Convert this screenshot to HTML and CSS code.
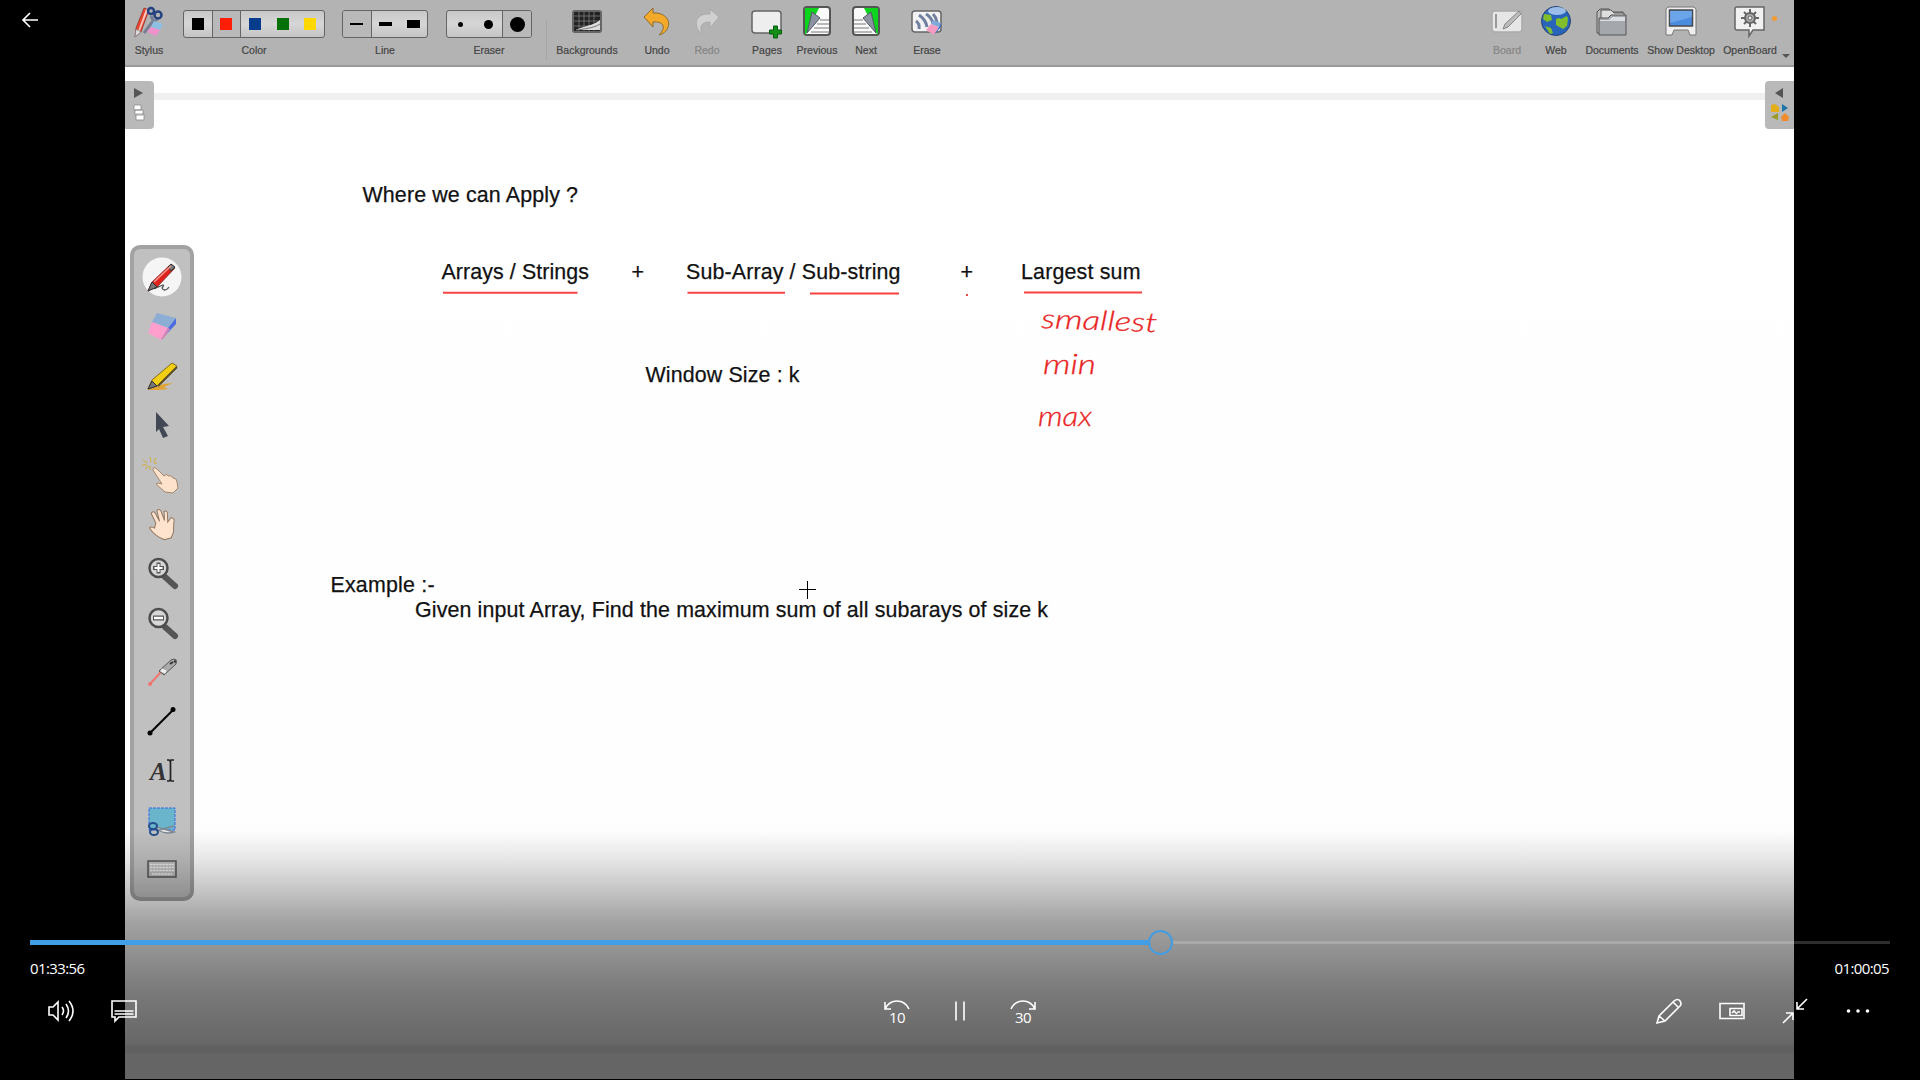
FILE: index.html
```html
<!DOCTYPE html>
<html lang="en">
<head>
<meta charset="utf-8">
<title>Video player</title>
<link rel="stylesheet" href="styles.css">
</head>
<body>
<main class="player">
  <section class="video">
    <header class="toolbar">
      <div class="tool stylus"><svg viewBox="0 0 32 32"><g transform="translate(1 2)"><path d="M10 1l5 2L7 25l-6 5 1-9z" fill="#e8442e" stroke="#863128" stroke-width=".7"/><path d="M12 2l2 1L5 26l-2 1z" fill="#fff" opacity=".7"/><path d="M2 22l5 3-6 5z" fill="#ddd" stroke="#777" stroke-width=".7"/><path d="M17 9l3 6 4-4M19 14l-9 12" stroke="#777f94" stroke-width="3" fill="none"/><circle cx="17" cy="4" r="3" fill="none" stroke="#24427f" stroke-width="2.500"/><circle cx="24" cy="8" r="3.500" fill="none" stroke="#24427f" stroke-width="2.500"/><path d="M20 14l9 3-3 6-9-3z" fill="#8ec0e4"/><path d="M17 20l9 3-4 6-9-4z" fill="#ef91cc"/></g></svg><span>Stylus</span></div>
      <div class="choice color"><div class="cells"><b><i class="black"></i></b><b class="on"><i class="red"></i></b><b><i class="blue"></i></b><b><i class="green"></i></b><b><i class="yellow"></i></b></div><span>Color</span></div>
      <div class="choice line"><div class="cells"><b class="on"><i class="thin"></i></b><b><i class="mid"></i></b><b><i class="thick"></i></b></div><span>Line</span></div>
      <div class="choice eraser"><div class="cells"><b><i class="dot-s"></i></b><b><i class="dot-m"></i></b><b class="on"><i class="dot-l"></i></b></div><span>Eraser</span></div>
      <div class="divider"></div>
      <div class="tool backgrounds"><svg viewBox="0 0 32 32"><rect x="2" y="6" width="28" height="21" rx="2" fill="#222" stroke="#666" stroke-width="2"/><path d="M3 11h26M3 16h26M3 21h26M8 7v19M13 7v19M18 7v19M23 7v19" stroke="#888" stroke-width=".7"/><path d="M5 25c7-4 17-4 24-10v10z" fill="#ddd"/><path d="M5 25c8-1 18-2 24-6" stroke="#777" fill="none"/></svg><span>Backgrounds</span></div>
      <div class="tool undo"><svg viewBox="0 0 32 32"><path d="M3 12L12 3v5c11-1 18 7 15 14-1 4-5 7-9 8 8-8 4-14-6-13v5z" fill="#f3aa2b" stroke="#8c6a2f"/></svg><span>Undo</span></div>
      <div class="tool redo faded"><svg viewBox="0 0 32 32"><path d="M28 12L19 4v5C8 8 3 15 6 23c1 3 3 4 5 5-3-7 0-11 8-11v6z" fill="#d0d0d0" stroke="#aaa"/></svg><span>Redo</span></div>
      <div class="tool pages"><svg viewBox="0 0 32 32"><rect x="1" y="6" width="29" height="22" rx="3" fill="#eee" stroke="#666" stroke-width="1.5"/><path d="M22.500 21h4v4h4v4h-4v4h-4v-4h-4v-4h4z" fill="#149018" stroke="#075b0a"/></svg><span>Pages</span></div>
      <div class="tool previous"><svg viewBox="0 0 32 32"><rect x="3" y="2" width="26" height="28" rx="3" fill="#fafafa" stroke="#555" stroke-width="2"/><path d="M4 3h14L5 29H4z" fill="#0cd31b"/><path d="M11 7l8 6L6 28z" fill="#8b93a0" stroke="#4e5862"/><path d="M19 15h9M16 19h12M13 23h15M10 27h18" stroke="#777"/></svg><span>Previous</span></div>
      <div class="tool next"><svg viewBox="0 0 32 32"><rect x="3" y="2" width="26" height="28" rx="3" fill="#fafafa" stroke="#555" stroke-width="2"/><path d="M28 3H14l13 26h1z" fill="#0cd31b"/><path d="M21 7l-8 6 13 15z" fill="#8b93a0" stroke="#4e5862"/><path d="M13 15H4M16 19H4M19 23H4M22 27H4" stroke="#777"/></svg><span>Next</span></div>
      <div class="tool erase"><svg viewBox="0 0 32 32"><rect x="1" y="6" width="29" height="21" rx="3" fill="#f3f3f3" stroke="#666" stroke-width="1.5"/><path d="M5 16q4 3 3 8M8 10q7 5 8 12M15 9q5 3 7 9M22 9q3 3 4 8" fill="none" stroke="#70809f" stroke-width="3"/><path d="M20 19l8 3-5 8-8-5z" fill="#f39bc1"/><path d="M22 15l8 3-2 4-8-3z" fill="#80a8d9"/><path d="M30 18v4l-7 8 5-8z" fill="#3c6cc2"/></svg><span>Erase</span></div>
      <div class="tool board faded"><svg viewBox="0 0 32 32"><rect x="1" y="6" width="30" height="21" rx="3" fill="#e6e6e6" stroke="#aaa" stroke-width="1.5"/><path d="M5 9v14" stroke="#999" stroke-width="2"/><path d="M12 24l2-5L28 6l2 3-13 13z" fill="#bbb" stroke="#888"/></svg><span>Board</span></div>
      <div class="tool web"><svg viewBox="0 0 32 32"><circle cx="16" cy="16" r="14.5" fill="#2865ba" stroke="#254273"/><path d="M4 9l7 1 1 5-5 2-4-3zM16 14l3-1 2 1 6-3 1 3-1 7-4 3-7-4zM5 21l6 2 2 5-3 1z" fill="#82bd2c"/><ellipse cx="17" cy="6" rx="9" ry="4" fill="#cae3ff" opacity=".7"/></svg><span>Web</span></div>
      <div class="tool documents"><svg viewBox="0 0 32 32"><path d="M1 28V7l3-3h9l3 3h11v21z" fill="#bbb" stroke="#555"/><path d="M5 10V5h10l3 3h10v9H5z" fill="#ddd" stroke="#555"/><path d="M3 13h9l3-3h15v20H3z" fill="#a4a8ad" stroke="#555"/><path d="M4 15h9l3-3h13v4H4z" fill="#d9dde0"/></svg><span>Documents</span></div>
      <div class="tool desktop"><svg viewBox="0 0 32 32"><path d="M3 2h26l2 2v26h-6l-2-5H9l-2 5H1V4z" fill="#eee" stroke="#777"/><rect x="4.500" y="5" width="23" height="16" fill="#4a8ce0" stroke="#484848" stroke-width="1.5"/><path d="M5 6h22v6L5 18z" fill="#82b4ee" opacity=".6"/></svg><span>Show Desktop</span></div>
      <div class="tool openboard"><svg viewBox="0 0 32 32"><path d="M3 2h27v23H19l-4 6v-6H3q-2 0-2-2V4q0-2 2-2z" fill="#f1f1f1" stroke="#666" stroke-width="1.5"/><g stroke="#666" stroke-width="2"><path d="M16 4v18M7 13h18M10 7l12 12M22 7L10 19"/><circle cx="16" cy="13" r="5" fill="#aaa"/><circle cx="16" cy="13" r="2" fill="#eee" stroke-width="1"/></g></svg><span>OpenBoard</span><em class="notice"></em></div>
      <div class="more-tools"></div>
    </header>

    <div class="canvas">
      <div class="page-edge"></div>
      <!-- Whiteboard page: units are pixels of the player window -->
      <svg class="notes" viewBox="125 67 1669 1012">
        <g class="typed">
          <text x="362.5" y="202" textLength="215.5">Where we can Apply ?</text>
          <text x="441.5" y="279" textLength="147.500">Arrays / Strings</text>
          <text x="631.5" y="279">+</text>
          <text x="686" y="279" textLength="214.5">Sub-Array / Sub-string</text>
          <text x="960.5" y="279">+</text>
          <text x="1021" y="279" textLength="119.5">Largest sum</text>
          <text x="645.5" y="381.500" textLength="154">Window Size : k</text>
          <text x="330.500" y="592" textLength="104">Example :-</text>
          <text x="415" y="617" textLength="633">Given input Array, Find the maximum sum of all subarays of size k</text>
        </g>
        <g class="underline"><path d="M443 292.7h134.500M687.500 292.700h97.500M810 293.500h89M1024 292.500h118M966 295h2"/></g>
        <g class="hand">
          <text x="1041" y="328" textLength="116" lengthAdjust="spacingAndGlyphs" transform="rotate(2 1041 328)">smallest</text>
          <text x="1043" y="374" textLength="53" lengthAdjust="spacingAndGlyphs">min</text>
          <text x="1038" y="426" textLength="54" lengthAdjust="spacingAndGlyphs">max</text>
        </g>
        <path class="crosshair" d="M799 589.500h17M807.500 581v18"/>
      </svg>
      <aside class="tab left"><svg viewBox="0 0 28 48"><path d="M9 7l9 5-9 5z" fill="#555"/><g fill="#fff" stroke="#888" stroke-width=".8"><path d="M9 24h7v5H9zM10 29h8v5h-8zM11 33h8v6h-8z"/></g></svg></aside>
      <aside class="tab right"><svg viewBox="0 0 28 48"><path d="M18 7l-8 5 8 5z" fill="#555"/><path d="M6 24l4-1 4 3v5H6z" fill="#e4ae1b"/><path d="M17 23l6 4-6 4z" fill="#1d75a8"/><path d="M13 32v7l-7-3z" fill="#999b23"/><path d="M16 36l4-4 4 4-1 4h-6z" fill="#f28b2c"/></svg></aside>
      <nav class="palette">
        <svg viewBox="0 0 40 40"><circle cx="20" cy="20" r="19.500" fill="#f5f5f5"/><path d="M12 32c8-4 12-6 8-1 2 4 6 1 7-1" fill="none" stroke="#555" stroke-width="1.300"/><path d="M6 34l4-9L29 7l4 4-18 19z" fill="#df221c" stroke="#722" stroke-width=".8"/><path d="M6 34l4-9 5 5zM26 10l3-3 4 3-4 4z" fill="#777" stroke="#333"/><path d="M12 25L29 9" stroke="#ff9890" stroke-width="1.500"/></svg>
        <svg viewBox="0 0 40 40"><path d="M15 7l19 5-8 10-16-6z" fill="#8caed4"/><path d="M10 16l16 6-7 12L6 27z" fill="#ff9fce"/><path d="M34 12v6L19 34l7-12z" fill="#4c6de0"/><path d="M26 22l-7 12 3-2 6-9z" fill="#d883b4"/></svg>
        <svg viewBox="0 0 40 40"><path d="M5 34l17-6 9-1-9 4 4 2-9 1z" fill="#e1a333"/><path d="M6 33l4-9L30 7l5 3-20 20z" fill="#f3cf14" stroke="#806b21"/><path d="M6 33l4-8 5 5z" fill="#777" stroke="#333"/><path d="M16 30L35 11" stroke="#594d25" stroke-width="2"/></svg>
        <svg viewBox="0 0 40 40"><path d="M14 7l13 14-6 1 5 9-5 2-4-9-3 3z" fill="#414753"/></svg>
        <svg viewBox="0 0 40 40"><path d="M1 6l4 3M8 3l1 5M14 4l-2 4M0 11h5M3 15l4-3M15 9h-3M8 12v4" stroke="#d2ad34"/><path d="M11 16q0-4 4-1l7 7q2-3 5 0 3-1 4 2 4 0 4 4l1 6-5 5-8-1-9-8q1-2 6 0z" fill="#ffe2cb" stroke="#a3866f"/></svg>
        <svg viewBox="0 0 40 40"><path d="M14 18L11 8q2-3 4 0l3 9-1-11q2-2 4 1l2 10 1-9q3-1 3 2l-1 9 4-4q4 2 2 5l-2 10-3 5-7 1q-9-5-13-14 2-2 5 1z" fill="#ffe3ce" stroke="#927762" transform="rotate(-9 20 20)"/></svg>
        <svg viewBox="0 0 40 40"><path d="M23 24l10 9" stroke="#555" stroke-width="6" stroke-linecap="round"/><circle cx="16.500" cy="15" r="9" fill="#d7d7d7" stroke="#4d4d4d" stroke-width="2.500"/><path d="M11 15h11M16.500 9.500v11" stroke="#555" stroke-width="4"/><path d="M12.500 15h8M16.500 11v8" stroke="#fff" stroke-width="2"/></svg>
        <svg viewBox="0 0 40 40"><path d="M23 25l10 9" stroke="#555" stroke-width="6" stroke-linecap="round"/><circle cx="16.500" cy="16" r="9" fill="#d7d7d7" stroke="#4d4d4d" stroke-width="2.500"/><path d="M11 16h11" stroke="#555" stroke-width="5"/><path d="M12 16h9" stroke="#fff" stroke-width="2.500"/></svg>
        <svg viewBox="0 0 40 40"><path d="M8 32l11-12" stroke="#ef7770" stroke-width="2"/><circle cx="8" cy="32" r="2" fill="#ef7770"/><path d="M17 19L29 8q7-3 5 4L22 23z" fill="#aaa" stroke="#555"/><path d="M19 18l5 2" stroke="#eee" stroke-width="3"/><path d="M28 12l3-2M32 9l2 1" stroke="#333" stroke-width="2"/></svg>
        <svg viewBox="0 0 40 40"><path d="M8 32L31 9" stroke="#000" stroke-width="2"/><circle cx="8" cy="32" r="2.500"/><circle cx="31" cy="8.500" r="2.500"/></svg>
        <svg viewBox="0 0 40 40"><text class="letter" x="8" y="30">A</text><path d="M25 10h2l1 1 1-1h3M25 31h2l1-1 1 1h3M28.500 11v19" fill="none" stroke="#222" stroke-width="1.700"/></svg>
        <svg viewBox="0 0 40 40"><path d="M7 8h26v22H7z" fill="#6bb5cc" stroke="#3268e5" stroke-dasharray="3 1"/><path d="M14 27l18 5q-9 3-17-3M14 31l18-5" fill="#eee" stroke="#7c8792" stroke-width="1.500"/><g fill="none" stroke="#244e8d" stroke-width="2"><ellipse cx="11" cy="26" rx="4" ry="3"/><ellipse cx="12" cy="32" rx="4" ry="3"/></g></svg>
        <svg viewBox="0 0 40 40"><path d="M6 12h28v16H6z" fill="#bbb" stroke="#555" stroke-width="1.500"/><path d="M8 15.500h24M8 18.500h24M8 21.500h24M10 25h20" stroke="#eee" stroke-width="1.700" stroke-dasharray="2.500 .6"/></svg>
      </nav>
    </div>
  </section>

  <div class="chrome">
    <svg class="back" viewBox="0 0 20 20"><path d="M17 10H3M9 3l-7 7 7 7"/></svg>
    <div class="transport">
      <div class="seek"><div class="elapsed"></div><div class="knob"></div><div class="remaining"></div></div>
      <div class="times"><span>01:33:56</span><span>01:00:05</span></div>
      <div class="controls">
        <div class="group">
          <button aria-label="Volume"><svg viewBox="0 0 32 32"><path d="M3 12h4l5-5v18l-5-5H3zM16 12q3 4 0 8M20 9q5 7 0 14M23 6q8 10 0 20"/></svg></button>
          <button aria-label="Captions"><svg viewBox="0 0 32 32"><path d="M3 6h24v16H10l-4 4v-4H3zM5.500 16h19M5.500 19h19"/></svg></button>
        </div>
        <div class="group">
          <button aria-label="Back 10 seconds"><svg viewBox="0 0 32 32"><path d="M4 14q4-8 12-8t12 8M4 7v7h6"/><text x="16" y="27.500">10</text></svg></button>
          <button aria-label="Pause"><svg viewBox="0 0 32 32"><path d="M12 6.500v19M20 6.500v19"/></svg></button>
          <button aria-label="Forward 30 seconds"><svg viewBox="0 0 32 32"><path d="M4 14q4-8 12-8t12 8M28 7v7h-6"/><text x="16" y="27.500">30</text></svg></button>
        </div>
        <div class="group end">
          <button aria-label="Edit"><svg viewBox="0 0 32 32"><path d="M4 28l2-7L21 6q4-3 6 0t0 5L12 26zM6 21l6 5M20 7l5 5"/></svg></button>
          <button aria-label="Mini view"><svg viewBox="0 0 32 32"><path d="M4 8.500h24v15H4zM14 13.500h12v7H14zM16 18l2-2 3 3M21 17h3"/></svg></button>
          <button aria-label="Exit full screen"><svg viewBox="0 0 32 32"><path d="M28 4L18 14M18 7v7h7M4 28l10-10M7 18h7v7"/></svg></button>
          <button aria-label="More"><svg viewBox="0 0 32 32"><g class="dots"><circle cx="6.500" cy="16" r="1.800"/><circle cx="16" cy="16" r="1.800"/><circle cx="25.500" cy="16" r="1.800"/></g></svg></button>
        </div>
      </div>
    </div>
  </div>
</main>
</body>
</html>
```
FILE: styles.css
```css
* { box-sizing: border-box; }
body { margin: 0; background: #000; }
.player { position: relative; width: 1920px; height: 1080px; overflow: hidden; background: #000; }
.video { width: 1669px; height: 1079px; margin-left: 125px; background: #fdfdfd; display: flex; flex-direction: column; }

/* Whiteboard toolbar */
.toolbar { height: 67px; flex: none; display: flex; background: #b3b3b3; border-bottom: 2px solid #999; padding-right: 4px; font: 10.5px/12px "Liberation Sans", sans-serif; color: #444; }
.tool { position: relative; width: 44px; padding-top: 5px; display: flex; flex-direction: column; align-items: center; gap: 7px; white-space: nowrap; }
.tool svg { width: 32px; height: 32px; display: block; overflow: visible; }
.tool span, .choice span { -webkit-text-stroke: .2px; }
.faded { color: #858585; }
.stylus { width: 48px; }
.backgrounds { width: 66px; margin-left: 7px; }
.undo { margin-left: 15px; }
.redo { margin-left: 6px; }
.pages { margin-left: 16px; }
.previous { margin-left: 6px; }
.next { margin-left: 5px; }
.erase { margin-left: 17px; }
.board { margin-left: auto; }
.web { margin-left: 5px; }
.documents { width: 56px; margin-left: 6px; }
.desktop { width: 70px; margin-left: 6px; }
.openboard { width: 54px; margin-left: 7px; }
.notice { position: absolute; right: 0; top: 16px; width: 5px; height: 5px; border-radius: 50%; background: #f39a31; }
.more-tools { margin: 54px 0 0 5px; width: 8px; height: 0; border: 4px solid transparent; border-top-color: #555; border-bottom: 0; }
.divider { width: 1px; margin: 21px 0 5px 14px; border-left: 1px dotted #999; }
.choice { padding-top: 10px; display: flex; flex-direction: column; gap: 6px; text-align: center; }
.cells { height: 28px; display: flex; border: 1px solid #646464; border-radius: 3px; overflow: hidden; background: linear-gradient(#c8c8c8, #d6d6d6 50%, #c4c4c4); }
.cells b { flex: 1; display: flex; align-items: center; justify-content: center; }
.cells .on { background: #b9b9b9; border-left: 1px solid #666; border-right: 1px solid #666; }
.cells .on:first-child { border-left: 0; }
.cells .on:last-child { border-right: 0; }
.color { width: 142px; margin-left: 10px; }
.line { width: 86px; margin-left: 17px; }
.eraser { width: 86px; margin-left: 18px; }
.color i { width: 12px; height: 12px; }
.black, .thin, .mid, .thick { background: #000; }
.red { background: #ff1d08; }
.blue { background: #053d8c; }
.green { background: #057005; }
.yellow { background: #ffd800; }
.thin { width: 13px; height: 2px; }
.mid { width: 13px; height: 4px; }
.thick { width: 13px; height: 8px; }
.eraser i { border-radius: 50%; background: #000; }
.dot-s { width: 5px; height: 5px; }
.dot-m { width: 9px; height: 9px; }
.dot-l { width: 15px; height: 15px; }

/* Whiteboard page */
.canvas { position: relative; flex: 1; background: linear-gradient(#fff, #fdfdfd); }
.notes { position: absolute; inset: 0; width: 1669px; height: 1012px; }
.page-edge { position: absolute; top: 26px; left: 29px; right: 29px; height: 7px; background: #f0f0f0; }
.typed { font: 21.4px "Liberation Sans", Arial, sans-serif; fill: #111; stroke: #111; stroke-width: .25px; }
.underline path { stroke: #f84343; stroke-width: 2; fill: none; }
.hand { font: italic 300 27px Lato, sans-serif; fill: #e92424; stroke: #e92424; stroke-width: .3px; }
.crosshair { stroke: #000; stroke-width: 1; fill: none; }
.tab { position: absolute; top: 14px; width: 29px; height: 48px; background: #b9b9b9; }
.tab svg { width: 28px; height: 48px; display: block; }
.tab.left { left: 0; border-radius: 0 4px 4px 0; }
.tab.right { right: 0; border-radius: 4px 0 0 4px; }
.palette { position: absolute; left: 5px; top: 178px; width: 64px; height: 656px; padding: 8px 1px 8px 0; display: flex; flex-direction: column; align-items: center; justify-content: space-between; border: 4px solid #a2a2a2; border-radius: 10px; background: #c0c0c0; }
.palette svg { width: 40px; height: 40px; display: block; }
.letter { font: italic bold 25px "Liberation Serif", serif; fill: #333; }

/* Player controls over the picture */
.chrome { position: absolute; inset: 0; display: flex; flex-direction: column; justify-content: space-between; background: linear-gradient(transparent 830px, rgba(0,0,0,.10) 862px, rgba(0,0,0,.265) 900px, rgba(0,0,0,.36) 922px, rgba(0,0,0,.41) 945px, rgba(0,0,0,.52) 992px, rgba(0,0,0,.595) 1045px, rgba(0,0,0,.62) 1046px, rgba(0,0,0,.62) 1053px, rgba(0,0,0,.6) 1054px); }
.back { width: 20px; height: 20px; margin: 10px 0 0 21px; fill: none; stroke: #fff; stroke-width: 1.6; }
.transport { height: 150px; padding: 0 30px; color: #fff; }
.seek { height: 25px; display: flex; align-items: center; }
.elapsed { width: 1118px; height: 5px; background: #419de4; }
.knob { width: 25px; height: 25px; border: 2px solid #419de4; border-radius: 50%; }
.remaining { flex: 1; height: 3px; background: rgba(255,255,255,.18); }
.times { height: 39px; padding: 1px 1px 0 0; display: flex; justify-content: space-between; font: 15px/24px "Open Sans", sans-serif; letter-spacing: -.6px; }
.controls { height: 34px; display: grid; grid-template-columns: 1fr auto 1fr; }
.group { display: flex; }
.end { justify-content: flex-end; padding-right: 1px; }
.controls button { width: 63px; height: 34px; padding: 0; border: 0; background: none; display: flex; align-items: center; justify-content: center; }
.controls svg { width: 32px; height: 32px; fill: none; stroke: #fff; stroke-width: 1.6; }
.controls text { font: 15px "Open Sans", sans-serif; letter-spacing: -.5px; text-anchor: middle; fill: #fff; stroke: none; }
.dots { fill: #fff; stroke: none; }
```
